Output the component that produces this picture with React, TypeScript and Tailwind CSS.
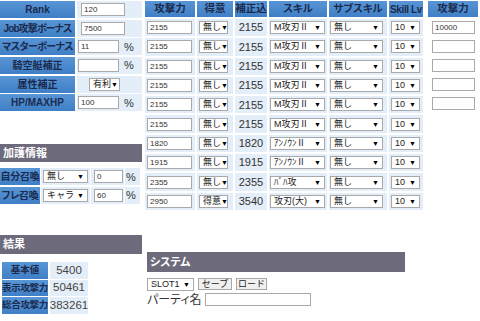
import React from "react";

const F = "font-['Liberation_Sans','Noto_Sans_CJK_JP',sans-serif]";

function Inp({ v = "", cls }: { v?: string; cls: string }) {
  return (
    <div
      className={`h-[13px] border border-[#a9a9a9] bg-white px-[2px] text-[8px] leading-[11px] text-[#333] ${cls}`}
    >
      {v}
    </div>
  );
}

function Sel({ v, cls }: { v: string; cls: string }) {
  return (
    <div
      className={`flex h-[13px] items-center justify-between border border-[#a9a9a9] bg-white pl-[3px] pr-[3px] text-[9px] leading-[11px] text-[#222] ${cls}`}
    >
      <span className="whitespace-nowrap">{v}</span>
      <span className="text-[7px] leading-[7px] text-black">▼</span>
    </div>
  );
}

const lbl =
  "flex items-center justify-center bg-gradient-to-b from-[#5895d5] to-[#3f7fc6] font-bold text-[#1b2b4e] [font-feature-settings:'palt'] whitespace-nowrap overflow-hidden";
const val = "flex items-center bg-[#e4eef8]";

function Bar({ t, cls }: { t: string; cls: string }) {
  return (
    <div
      className={`flex items-center bg-[#6d6a7b] pl-[3px] text-[11px] font-bold text-white [font-feature-settings:'palt'] ${cls}`}
    >
      {t}
    </div>
  );
}

type Row = [string, string, string, string];

const rows: Row[] = [
  ["2155", "無し", "2155", "M攻刃Ⅱ"],
  ["2155", "無し", "2155", "M攻刃Ⅱ"],
  ["2155", "無し", "2155", "M攻刃Ⅱ"],
  ["2155", "無し", "2155", "M攻刃Ⅱ"],
  ["2155", "無し", "2155", "M攻刃Ⅱ"],
  ["2155", "無し", "2155", "M攻刃Ⅱ"],
  ["1820", "無し", "1820", "ｱﾝﾉｳﾝⅡ"],
  ["1915", "無し", "1915", "ｱﾝﾉｳﾝⅡ"],
  ["2355", "無し", "2355", "ﾊﾞﾊ攻"],
  ["2950", "得意", "3540", "攻刃(大)"],
];

const heads: [string, string][] = [
  ["攻撃力", "text-[10.5px]"],
  ["得意", "text-[10.5px]"],
  ["補正込", "text-[10.5px]"],
  ["スキル", "text-[10.5px]"],
  ["サブスキル", "text-[10.5px]"],
  ["Skill Lv", "text-[10px] tracking-[-0.4px]"],
];

export default function App() {
  return (
    <div className={`relative h-[321px] w-[480px] overflow-hidden bg-white ${F}`}>
      <div className="flex">
        {/* Left column */}
        <div className="flex w-[145px] shrink-0 flex-col">
          <div className="grid grid-cols-[75px_65px] gap-x-[2px] gap-y-[1.7px] pt-[1px]">
            <div className={`${lbl} h-[17px] text-[10px]`}>Rank</div>
            <div className={`${val} h-[17px] pl-[4px]`}>
              <Inp v="120" cls="w-[44px]" />
            </div>
            <div className={`${lbl} h-[17px] text-[10px] tracking-[-0.9px]`}>Job攻撃ボーナス</div>
            <div className={`${val} h-[17px] pl-[4px]`}>
              <Inp v="7500" cls="w-[44px]" />
            </div>
            <div className={`${lbl} h-[17px] text-[10px] tracking-[-0.6px]`}>マスターボーナス</div>
            <div className={`${val} h-[17px] pl-[1px]`}>
              <Inp v="11" cls="w-[41px]" />
              <span className="ml-[5px] text-[11px] text-[#333]">%</span>
            </div>
            <div className={`${lbl} h-[17px] text-[10px]`}>騎空艇補正</div>
            <div className={`${val} h-[17px] pl-[1px]`}>
              <Inp cls="w-[41px]" />
              <span className="ml-[5px] text-[11px] text-[#333]">%</span>
            </div>
            <div className={`${lbl} h-[17px] text-[10px]`}>属性補正</div>
            <div className={`${val} h-[17px] pl-[12px]`}>
              <Sel v="有利" cls="w-[31px]" />
            </div>
            <div className={`${lbl} h-[17px] text-[10px]`}>HP/MAXHP</div>
            <div className={`${val} h-[17px] pl-[1px]`}>
              <Inp v="100" cls="w-[41px]" />
              <span className="ml-[5px] text-[11px] text-[#333]">%</span>
            </div>
          </div>

          <Bar t="加護情報" cls="mt-[33px] h-[18px] w-[142px]" />

          <div className="mt-[6px] grid grid-cols-[40px_49px_33px_15px] gap-x-[1px] gap-y-[1.5px]">
            <div className={`${lbl} h-[17px] text-[10px] tracking-[-0.3px]`}>自分召喚</div>
            <div className={`${val} h-[17px] pl-[2px]`}>
              <Sel v="無し" cls="w-[45px]" />
            </div>
            <div className={`${val} h-[17px] pl-[3px]`}>
              <Inp v="0" cls="w-[29px]" />
            </div>
            <div className={`${val} h-[17px] pl-[1px] text-[11px] text-[#333]`}>%</div>
            <div className={`${lbl} h-[17px] text-[10px] tracking-[-0.3px]`}>フレ召喚</div>
            <div className={`${val} h-[17px] pl-[2px]`}>
              <Sel v="キャラ" cls="w-[45px]" />
            </div>
            <div className={`${val} h-[17px] pl-[3px]`}>
              <Inp v="60" cls="w-[29px]" />
            </div>
            <div className={`${val} h-[17px] pl-[1px] text-[11px] text-[#333]`}>%</div>
          </div>

          <Bar t="結果" cls="mt-[31px] h-[19px] w-[142px]" />

          <div className="ml-[2px] mt-[8px] grid grid-cols-[46px_38px] gap-x-[2px] gap-y-[1px]">
            <div className={`${lbl} h-[17px] text-[9.5px]`}>基本値</div>
            <div className={`${val} h-[17px] justify-center text-[11.5px] text-[#444]`}>5400</div>
            <div className={`${lbl} h-[16px] text-[9.5px] tracking-[-0.3px]`}>表示攻撃力</div>
            <div className={`${val} h-[16px] justify-center text-[11.5px] text-[#444]`}>50461</div>
            <div className={`${lbl} h-[17px] text-[9.5px] tracking-[-0.3px]`}>総合攻撃力</div>
            <div className={`${val} h-[17px] justify-center text-[11.5px] text-[#444]`}>383261</div>
          </div>
        </div>

        {/* Middle column */}
        <div className="flex w-[280px] shrink-0 flex-col">
          <div className="grid grid-cols-[50px_36px_32px_58px_58px_34px] gap-x-[2px] gap-y-[2px] pt-[1px]">
            {heads.map(([h, c]) => (
              <div key={h} className={`${lbl} h-[16px] ${c}`}>
                {h}
              </div>
            ))}
            {rows.map((r, i) => (
              <React.Fragment key={i}>
                <div className={`${val} h-[17.3px] pl-[2px]`}>
                  <Inp v={r[0]} cls="w-[45px]" />
                </div>
                <div className={`${val} h-[17.3px] pl-[2px]`}>
                  <Sel v={r[1]} cls="w-[29px]" />
                </div>
                <div className={`${val} h-[17.3px] justify-center text-[11px] text-[#333]`}>
                  {r[2]}
                </div>
                <div className={`${val} h-[17.3px] pl-[1px]`}>
                  <Sel v={r[3]} cls="w-[55px]" />
                </div>
                <div className={`${val} h-[17.3px] pl-[1px]`}>
                  <Sel v="無し" cls="w-[53px]" />
                </div>
                <div className={`${val} h-[17.3px] pl-[2px]`}>
                  <Sel v="10" cls="w-[29px]" />
                </div>
              </React.Fragment>
            ))}
          </div>

          <div className="ml-[2px]">
            <Bar t="システム" cls="mt-[42px] h-[20px] w-[258px]" />
            <div className="mt-[6px] flex items-center">
              <Sel v="SLOT1" cls="w-[47px] h-[11px] text-[8px]" />
              <div className="ml-[4px] flex h-[12px] w-[34px] items-center justify-center border border-[#a9a9a9] bg-[#f0f0f0] text-[9px] text-[#222]">
                セーブ
              </div>
              <div className="ml-[4px] flex h-[12px] w-[31px] items-center justify-center border border-[#a9a9a9] bg-[#f0f0f0] text-[9px] text-[#222]">
                ロード
              </div>
            </div>
            <div className="mt-[2px] flex items-center">
              <span className="text-[12px] leading-[14px] text-[#333] [font-feature-settings:'palt']">パーティ名</span>
              <Inp cls="ml-[3px] w-[106px]" />
            </div>
          </div>
        </div>

        {/* Right column */}
        <div className="ml-[3px] flex w-[50px] shrink-0 flex-col pt-[1px]">
          <div className={`${lbl} h-[16px] text-[10.5px]`}>攻撃力</div>
          <div className="flex flex-col gap-[6px] pl-[4px] pt-[4px]">
            <Inp v="10000" cls="w-[43px] h-[12px]" />
            <Inp cls="w-[43px] h-[12px]" />
            <Inp cls="w-[43px] h-[12px]" />
            <Inp cls="w-[43px] h-[12px]" />
            <Inp cls="w-[43px] h-[12px]" />
          </div>
        </div>
      </div>
    </div>
  );
}
